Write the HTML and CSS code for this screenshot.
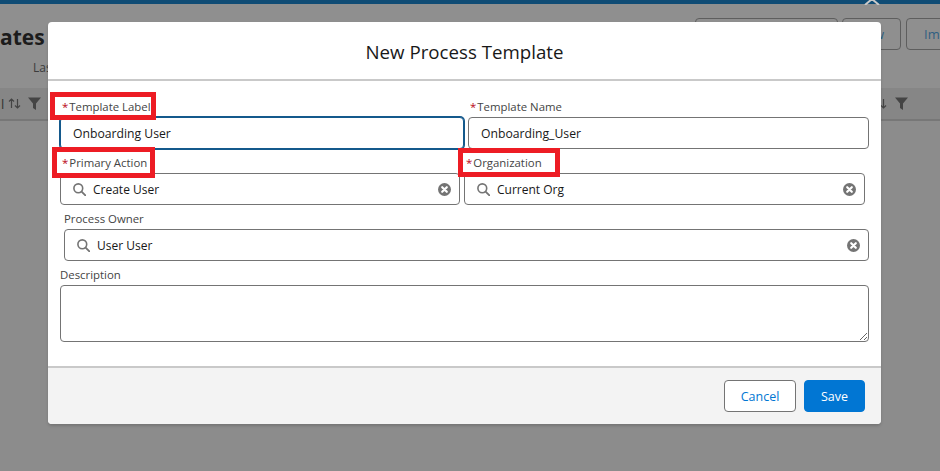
FILE: index.html
```html
<!DOCTYPE html>
<html lang="en">
<head>
<meta charset="utf-8">
<title>New Process Template</title>
<link rel="stylesheet" href="styles.css">
</head>
<body>
<div class="page">
  <div class="topbar">
    <svg class="close-x" viewBox="0 0 16 6" width="16" height="6"><path d="M1 6 L8 0 L15 6" fill="none" stroke="#c9c9c9" stroke-width="2"/></svg>
  </div>
  <div class="page-head">
    <div class="page-title">
      <div class="title-text">ates</div>
      <div class="title-sub">Las</div>
    </div>
    <div class="page-actions">
      <div class="bg-btn bg-btn-wide"></div>
      <div class="bg-btn bg-btn-new">w</div>
      <div class="bg-btn bg-btn-imp">Imp</div>
    </div>
  </div>
  <div class="table-head">
    <div class="th-group">
      <span class="th-letter">l</span>
      <svg viewBox="0 0 13 13" width="13" height="13"><path d="M3.5 11V2M1 4.5 3.5 2 6 4.5M9.5 2v9M7 8.5 9.5 11 12 8.5" fill="none" stroke="#444" stroke-width="1.2"/></svg>
      <svg class="filter" viewBox="0 0 13 13" width="13" height="13"><path d="M0 0.5H13L8 6.5V13L5 11V6.5Z" fill="#444"/></svg>
    </div>
    <div class="th-group th-right">
      <svg viewBox="0 0 7 13" width="7" height="13"><path d="M3.5 2v9M1 8.5 3.5 11 6 8.5" fill="none" stroke="#444" stroke-width="1.2"/></svg>
      <svg class="filter" viewBox="0 0 13 13" width="13" height="13"><path d="M0 0.5H13L8 6.5V13L5 11V6.5Z" fill="#444"/></svg>
    </div>
  </div>
</div>

<section class="modal" role="dialog" aria-label="New Process Template">
  <header class="modal-head"><h2 class="modal-title">New Process Template</h2></header>
  <div class="modal-body">
    <div class="row row-first">
      <div class="field col-a">
        <span class="mark mark-label"></span>
        <div class="label"><span class="req">*</span>Template Label</div>
        <div class="box box-focus" role="textbox">Onboarding User</div>
      </div>
      <div class="field col-b">
        <div class="label"><span class="req">*</span>Template Name</div>
        <div class="box" role="textbox">Onboarding_User</div>
      </div>
    </div>
    <div class="row">
      <div class="field col-c">
        <span class="mark mark-action"></span>
        <div class="label"><span class="req">*</span>Primary Action</div>
        <div class="box box-lookup" role="combobox">
          <svg class="search" viewBox="0 0 13 13" width="13" height="13"><circle cx="5.3" cy="5.3" r="4.4" fill="none" stroke="#747474" stroke-width="1.6"/><path d="M8.6 8.6 12.4 12.4" stroke="#747474" stroke-width="1.8" stroke-linecap="round"/></svg>
          <span class="lookup-text">Create User</span>
          <svg class="clear" viewBox="0 0 13 13" width="13" height="13"><circle cx="6.5" cy="6.5" r="6.5" fill="#747474"/><path d="M4.2 4.2 8.8 8.8M8.8 4.2 4.2 8.8" stroke="#fff" stroke-width="2.2" stroke-linecap="round"/></svg>
        </div>
      </div>
      <div class="field col-b">
        <span class="mark mark-org"></span>
        <div class="label"><span class="req">*</span>Organization</div>
        <div class="box box-lookup" role="combobox">
          <svg class="search" viewBox="0 0 13 13" width="13" height="13"><circle cx="5.3" cy="5.3" r="4.4" fill="none" stroke="#747474" stroke-width="1.6"/><path d="M8.6 8.6 12.4 12.4" stroke="#747474" stroke-width="1.8" stroke-linecap="round"/></svg>
          <span class="lookup-text">Current Org</span>
          <svg class="clear" viewBox="0 0 13 13" width="13" height="13"><circle cx="6.5" cy="6.5" r="6.5" fill="#747474"/><path d="M4.2 4.2 8.8 8.8M8.8 4.2 4.2 8.8" stroke="#fff" stroke-width="2.2" stroke-linecap="round"/></svg>
        </div>
      </div>
    </div>
    <div class="row row-owner">
      <div class="field col-full">
        <div class="label">Process Owner</div>
        <div class="box box-lookup" role="combobox">
          <svg class="search" viewBox="0 0 13 13" width="13" height="13"><circle cx="5.3" cy="5.3" r="4.4" fill="none" stroke="#747474" stroke-width="1.6"/><path d="M8.6 8.6 12.4 12.4" stroke="#747474" stroke-width="1.8" stroke-linecap="round"/></svg>
          <span class="lookup-text">User User</span>
          <svg class="clear" viewBox="0 0 13 13" width="13" height="13"><circle cx="6.5" cy="6.5" r="6.5" fill="#747474"/><path d="M4.2 4.2 8.8 8.8M8.8 4.2 4.2 8.8" stroke="#fff" stroke-width="2.2" stroke-linecap="round"/></svg>
        </div>
      </div>
    </div>
    <div class="row">
      <div class="field col-desc">
        <div class="label">Description</div>
        <textarea class="area" aria-label="Description"></textarea>
      </div>
    </div>
  </div>
  <footer class="modal-foot">
    <button class="btn btn-neutral" type="button">Cancel</button>
    <button class="btn btn-brand" type="button">Save</button>
  </footer>
</section>
</body>
</html>
```
FILE: styles.css
```css
* { box-sizing: border-box; }
html, body { margin: 0; padding: 0; height: 100%; }
body {
  position: relative;
  overflow: hidden;
  background: #8c8c8c;
  font-family: "Open Sans", "Noto Sans", sans-serif;
  color: #181818;
}

/* dimmed page behind the dialog */
.page { height: 100%; background: #8c8c8c; }
.topbar {
  position: relative;
  height: 4px;
  background: #0f4c75;
}
.close-x { position: absolute; left: 864px; top: -1px; }
.page-head {
  display: flex;
  justify-content: space-between;
  height: 84px;
  background: #8f8f8f;
}
.title-text {
  margin-top: 19px;
  font-size: 21px;
  line-height: 28px;
  font-weight: 700;
  color: #1c1c1c;
}
.title-sub {
  margin: 9px 0 0 33px;
  font-size: 12px;
  line-height: 16px;
  color: #3c3c3c;
}
.page-actions { display: flex; gap: 5px; padding-top: 14px; margin-right: -40px; }
.bg-btn {
  width: 60px;
  height: 32px;
  border: 1px solid #5e5e5e;
  border-radius: 4px;
  color: #2f5f82;
  font-size: 13px;
  line-height: 30px;
  text-align: right;
  padding-right: 16px;
}
.bg-btn-wide { width: 143px; margin-right: -1px; }
.bg-btn-new { width: 59px; }
.bg-btn-imp { width: 74px; text-align: left; padding-left: 17px; }
.table-head {
  display: flex;
  justify-content: space-between;
  align-items: center;
  height: 33px;
  background: #868686;
  border-bottom: 2px solid #777;
}
.th-group { display: flex; align-items: center; gap: 7px; padding-left: 1px; }
.th-letter { font-size: 13px; color: #333; width: 1px; margin-right: -1px; }
.th-right { padding-right: 32px; gap: 8px; }

/* dialog */
.modal {
  position: absolute;
  left: 48px;
  top: 22px;
  width: 833px;
  height: 402px;
  display: flex;
  flex-direction: column;
  background: #fff;
  border-radius: 4px;
  box-shadow: 0 2px 3px rgba(0, 0, 0, .16);
}
.modal-head {
  height: 59px;
  flex: none;
  display: flex;
  align-items: center;
  justify-content: center;
  border-bottom: 2px solid #c9c9c9;
  padding-top: 3px;
}
.modal-title {
  margin: 0;
  font-size: 18.7px;
  line-height: 24px;
  font-weight: 400;
  color: #181818;
}
.modal-body {
  flex: 1;
  padding: 12px 0 0 12px;
}
.row { display: flex; gap: 4px; }
.row-owner { padding-left: 4px; }
.field { position: relative; }
.col-a { width: 404px; }
.col-b { width: 401px; }
.col-c { width: 400px; }
.col-full { width: 805px; }
.col-desc { width: 809px; }
.label {
  height: 24px;
  padding-top: 6px;
  font-size: 11.4px;
  line-height: 16px;
  color: #444;
}
.req { color: #ba0517; margin: 0 1px 0 2px; }
.box {
  display: flex;
  align-items: center;
  height: 32px;
  padding: 0 12px;
  border: 1px solid #747474;
  border-radius: 4px;
  background: #fff;
  font-size: 12.2px;
  color: #181818;
}
.box-focus {
  border-color: #14598c;
  box-shadow: 0 0 0 1px #14598c;
}
.search { flex: none; margin-right: 7px; }
.lookup-text { flex: 1; font-size: 12px; }
.clear { flex: none; margin-right: -4px; }
.area {
  display: block;
  width: 100%;
  height: 57px;
  border: 1px solid #747474;
  border-radius: 4px;
  resize: vertical;
  background: #fff;
  outline: none;
}

/* red annotation frames drawn over the form */
.mark {
  position: absolute;
  z-index: 2;
  border: 5px solid #ed1c24;
  pointer-events: none;
}
.mark-label { left: -10px; top: -1px; width: 106px; height: 28px; }
.mark-action { left: -8px; top: -2px; width: 103px; height: 31px; }
.mark-org { left: -6px; top: -1px; width: 102px; height: 29px; }

.modal-foot {
  height: 58px;
  flex: none;
  display: flex;
  justify-content: flex-end;
  gap: 8px;
  padding: 12px 16px 0 0;
  background: #f3f3f3;
  border-top: 2px solid #c9c9c9;
  border-radius: 0 0 4px 4px;
}
.btn {
  height: 32px;
  padding: 0;
  border-radius: 4px;
  font-family: inherit;
  font-size: 12.5px;
}
.btn-neutral {
  width: 72px;
  background: #fff;
  border: 1px solid #747474;
  color: #0176d3;
}
.btn-brand {
  width: 61px;
  background: #0176d3;
  border: 1px solid #0176d3;
  color: #fff;
}
```
